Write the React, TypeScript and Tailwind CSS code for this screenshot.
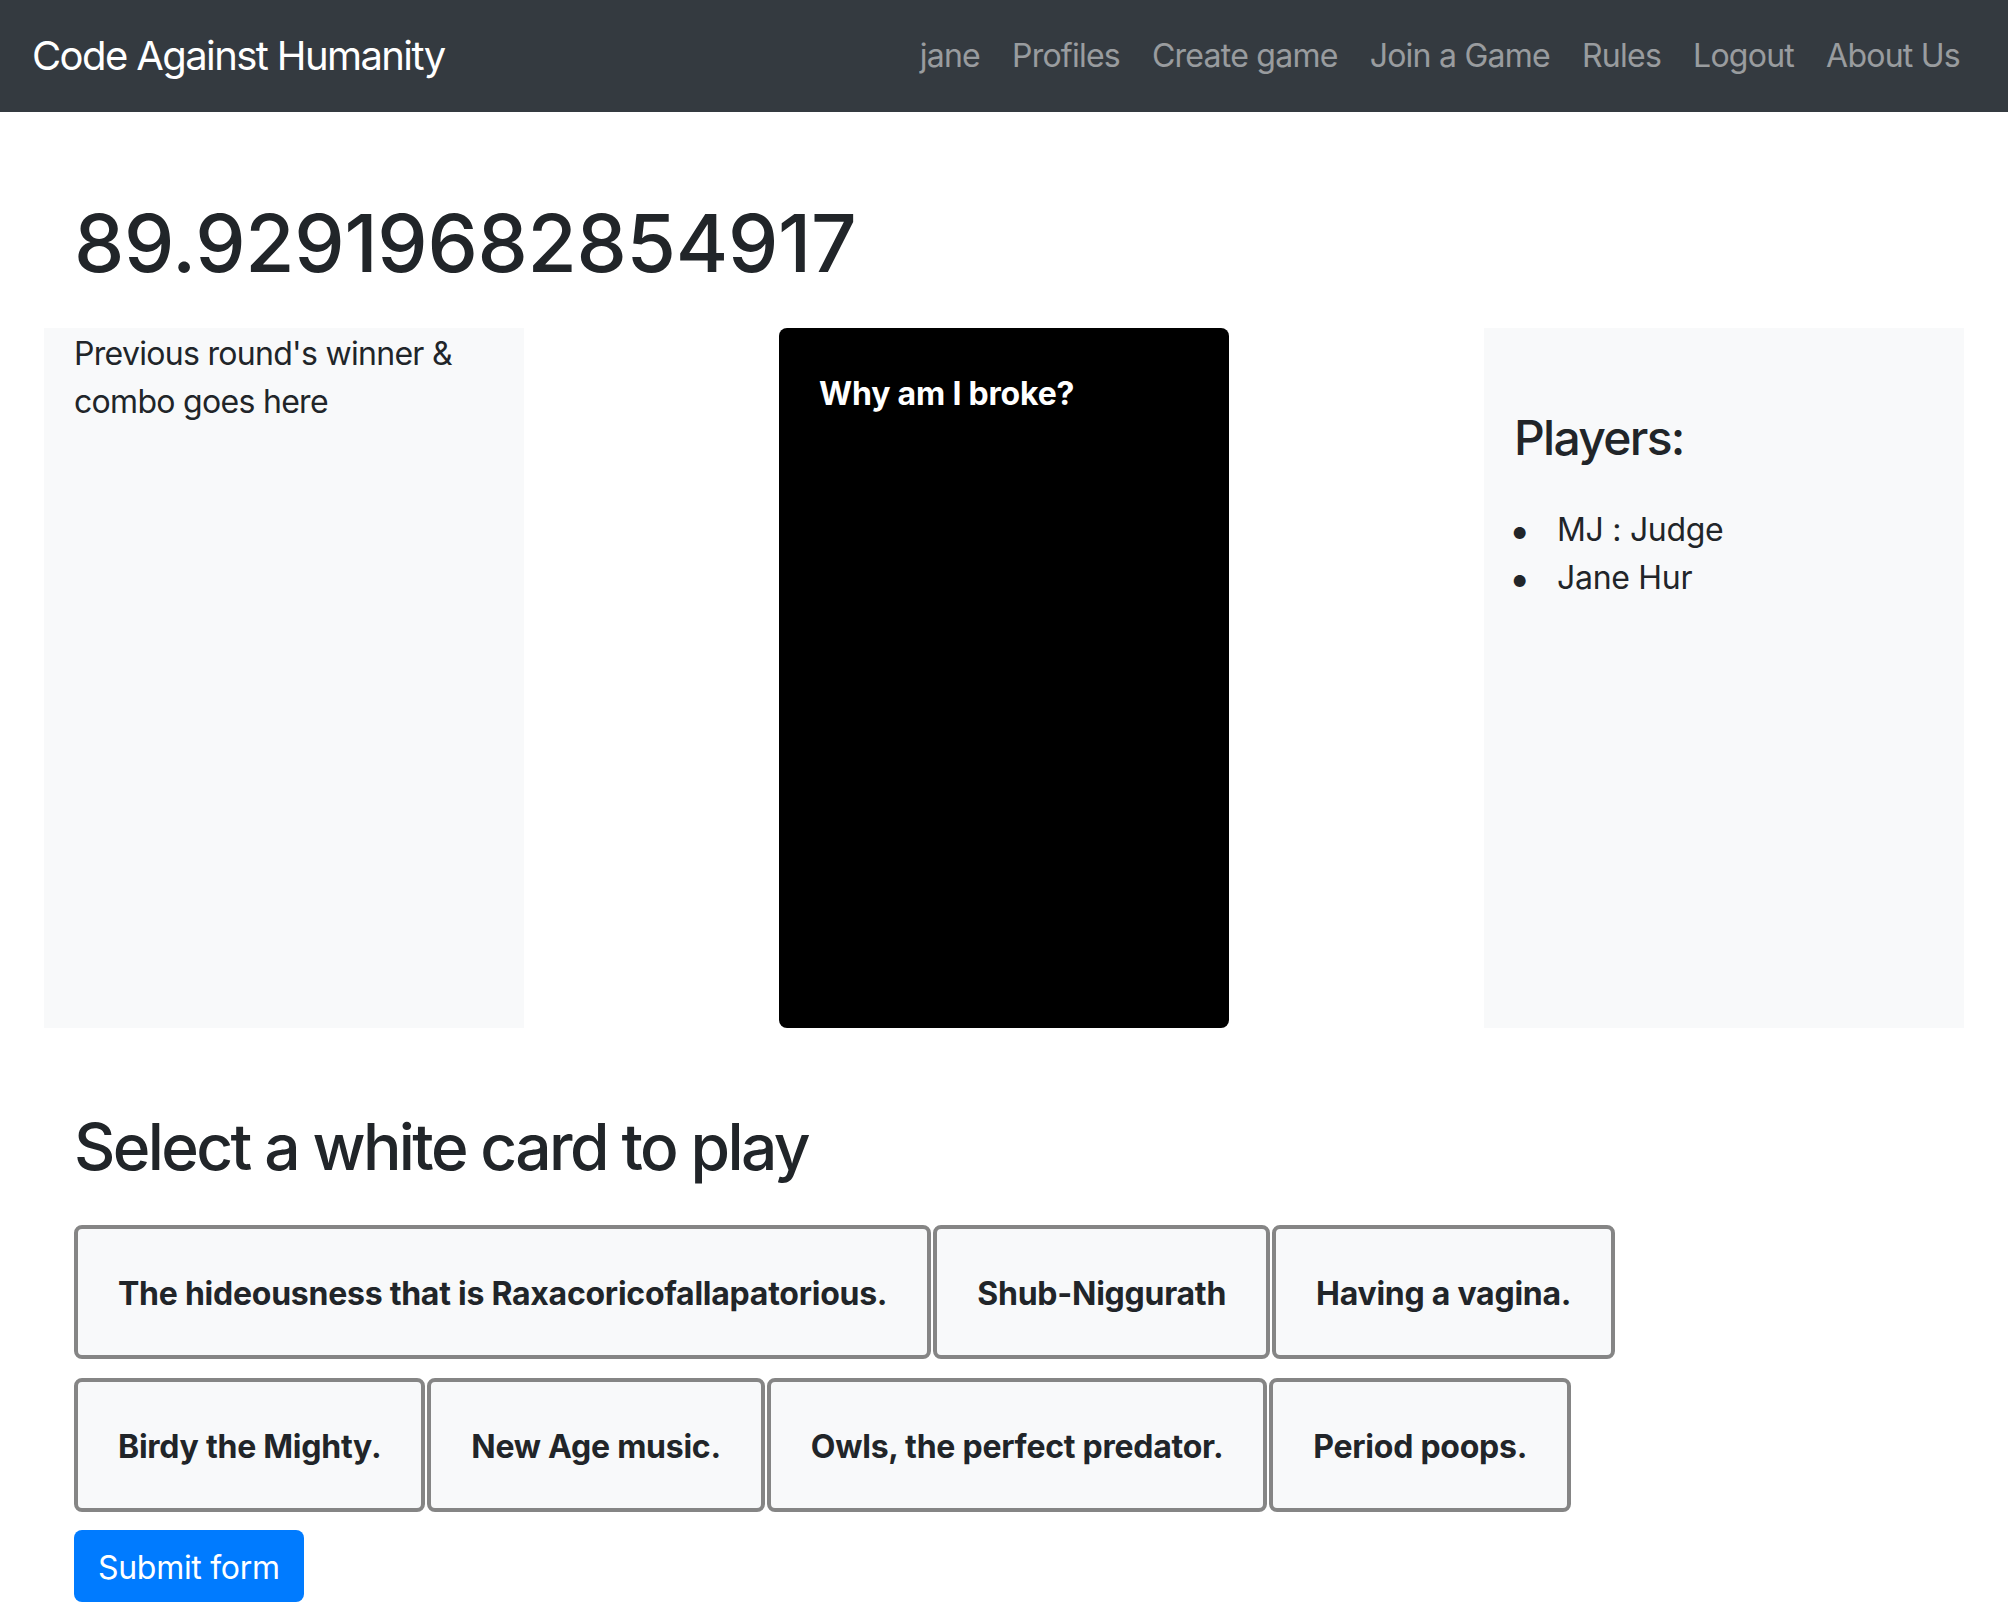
const navLinks = ["jane", "Profiles", "Create game", "Join a Game", "Rules", "Logout", "About Us"];

const players = ["MJ : Judge", "Jane Hur"];

const cardRows = [
  ["The hideousness that is Raxacoricofallapatorious.", "Shub-Niggurath", "Having a vagina."],
  ["Birdy the Mighty.", "New Age music.", "Owls, the perfect predator.", "Period poops."],
];

const App = () => {
  return (
    <div className="min-h-screen bg-white text-[#212529] font-['Inter','Liberation_Sans',sans-serif]">
      <nav className="h-[112px] bg-[#343a40] px-[32px] flex items-center justify-between">
        <a className="text-[40px] leading-[60px] text-white tracking-[-1.6px]">Code Against Humanity</a>
        <div className="flex">
          {navLinks.map((link) => (
            <a key={link} className="px-[16px] text-[32px] leading-[48px] text-white/50 tracking-[-0.75px]">
              {link}
            </a>
          ))}
        </div>
      </nav>

      <div className="w-[1920px] mx-auto px-[30px]">
        <h1 className="mt-[83px] mb-[37px] text-[80px] leading-[96px] font-medium tracking-[-0.3px]">89.92919682854917</h1>

        <div className="-mx-[30px] flex h-[700px]">
          <div className="w-[480px] bg-[#f8f9fa] px-[30px] pt-[2px]">
            <p className="text-[32px] leading-[48px] tracking-[-0.7px]">Previous round's winner &amp; combo goes here</p>
          </div>
          <div className="w-[960px] flex justify-center">
            <div className="w-[450px] h-full bg-black rounded-[8px] px-[40px] pt-[42px]">
              <p className="text-[32px] leading-[48px] font-bold text-white tracking-[-0.2px]">Why am I broke?</p>
            </div>
          </div>
          <div className="w-[480px] bg-[#f8f9fa] px-[30px] pt-[81px]">
            <h4 className="text-[48px] leading-[58px] font-medium tracking-[-1.7px] mb-[39px]">Players:</h4>
            <ul>
              {players.map((p) => (
                <li key={p} className="flex text-[32px] leading-[48px] tracking-[-0.3px]">
                  <span className="w-[48px] shrink-0 -ml-[5px] text-[38px]">•</span>
                  <span>{p}</span>
                </li>
              ))}
            </ul>
          </div>
        </div>

        <h2 className="mt-[80px] mb-[40px] text-[64px] leading-[77px] font-medium tracking-[-2.6px]">Select a white card to play</h2>

        <div className="flex flex-col gap-[19px]">
          {cardRows.map((row, i) => (
            <div key={i} className="flex gap-[2px]">
              {row.map((card) => (
                <button
                  key={card}
                  className="bg-[#f8f9fa] border-[4px] border-[#858585] rounded-[8px] px-[40px] pt-[41px] pb-[37px] text-[32px] leading-[48px] font-bold text-[#212529] tracking-[-0.25px]"
                >
                  {card}
                </button>
              ))}
            </div>
          ))}
        </div>

        <button className="mt-[18px] bg-[#007bff] text-white rounded-[8px] px-[24px] pt-[14px] pb-[10px] text-[32px] leading-[48px] tracking-[-0.3px]">
          Submit form
        </button>
      </div>
    </div>
  );
};

export default App;
